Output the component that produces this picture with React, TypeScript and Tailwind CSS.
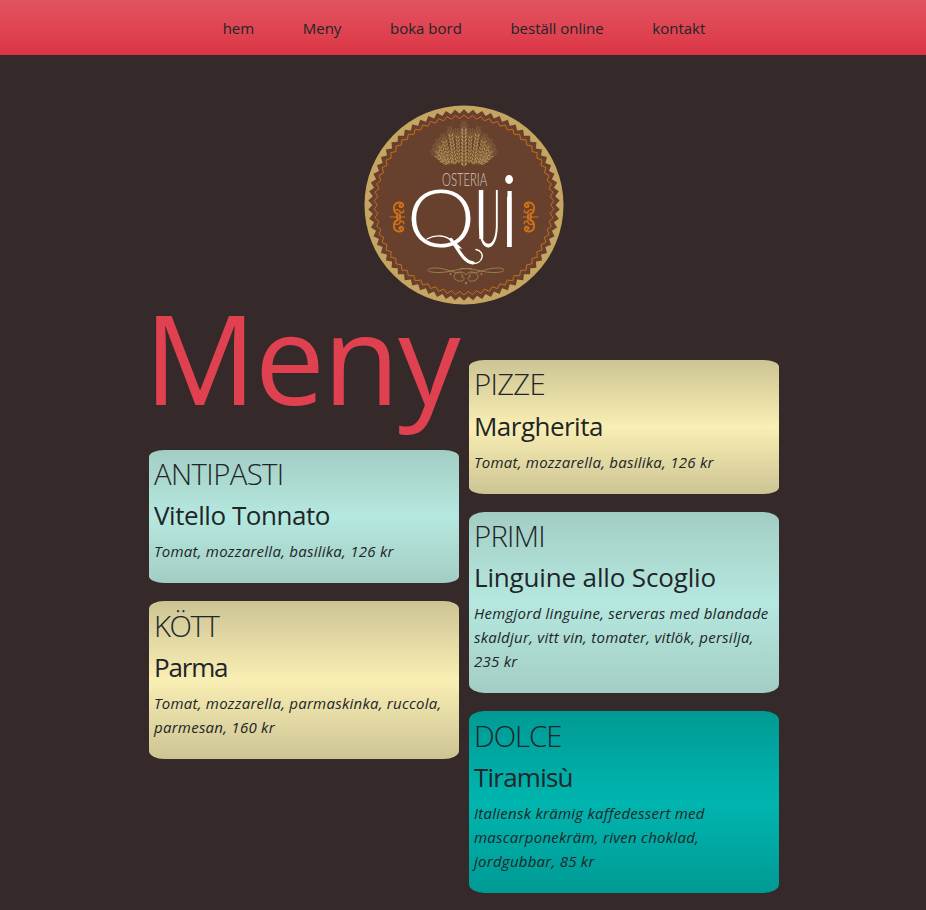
import React from "react";

const CX = 100;
const CY = 100;
const TEETH = 66;

function zigzag(outer: number, inner: number, teeth: number): string {
  const pts: string[] = [];
  for (let i = 0; i < teeth * 2; i++) {
    const a = (Math.PI * i) / teeth - Math.PI / 2;
    const r = i % 2 === 0 ? outer : inner;
    pts.push(`${(CX + r * Math.cos(a)).toFixed(2)},${(CY + r * Math.sin(a)).toFixed(2)}`);
  }
  return pts.join(" ");
}

const ears = [
  { x: 19, y: 59, len: 20, angle: 43, s: 0.8 },
  { x: 17, y: 60, len: 25, angle: 33, s: 0.8 },
  { x: 15, y: 60, len: 29, angle: 24, s: 0.8 },
  { x: 12.5, y: 60, len: 33, angle: 16, s: 0.85 },
  { x: 9, y: 60, len: 39, angle: 8, s: 0.95 },
  { x: 5, y: 59, len: 36, angle: 3, s: 0.75 },
  { x: 0, y: 62, len: 46, angle: 0, s: 1.15 },
];

function Ear({ x, y, len, angle, s }: { x: number; y: number; len: number; angle: number; s: number }) {
  const grains = [];
  for (let gy = -len + 9; gy < -2; gy += 3.4) {
    grains.push(
      <g key={gy}>
        <ellipse cx={-1.5 * s} cy={gy} rx={0.85 * s} ry={2} transform={`rotate(-28 ${-1.5 * s} ${gy})`} />
        <ellipse cx={1.5 * s} cy={gy} rx={0.85 * s} ry={2} transform={`rotate(28 ${1.5 * s} ${gy})`} />
      </g>
    );
  }
  return (
    <g transform={`translate(${CX + x} ${y}) rotate(${angle})`} fill="#ab8d55">
      {grains}
      <path
        d={`M0 0V${-len + 5}M-1.3 ${-len + 8}L-1.8 ${-len}M1.3 ${-len + 8}L1.8 ${-len}M0 ${-len + 7}V${-len}M-2.5 ${-len + 11}L-3.2 ${-len + 3}M2.5 ${-len + 11}L3.2 ${-len + 3}`}
        stroke="#957544"
        strokeWidth="0.5"
        fill="none"
      />
    </g>
  );
}

function SideOrnament() {
  return (
    <g fill="none" stroke="#d07019" strokeLinecap="round">
      <path d="M-8.5 0H6.5" strokeWidth="1.1" />
      <path d="M-1 -4V4M1.5 -4.5V4.5" strokeWidth="1.3" />
      <circle cx="0" cy="0" r="2.1" strokeWidth="1.3" />
      {[1, -1].map((f) => (
        <g key={f} transform={`scale(1 ${f})`}>
          <path d="M-1 -3C-6 -5 -6 -14 .5 -14.5C5 -14.8 6 -10.5 3 -9.8C.5 -9.5 .2 -12 2 -12.2" strokeWidth="1.9" />
          <path d="M-3 -7C-1 -8 1 -6.5 1.8 -5.2C3.5 -3.4 6 -4.5 5 -6.8" strokeWidth="1.4" />
        </g>
      ))}
    </g>
  );
}

function Logo() {
  return (
    <svg className="size-[200px]" viewBox="0 0 200 200">
      <defs>
        <clipPath id="bowl">
          <rect x="40" y="80" width="75" height="63.500" />
        </clipPath>
      </defs>
      <circle cx={CX} cy={CY} r="99.5" fill="#c4a562" />
      <polygon points={zigzag(95.8, 91.6, TEETH)} fill="#67412d" />
      <polygon points={zigzag(90, 86.6, TEETH)} fill="none" stroke="#d2701c" strokeWidth="0.9" />
      {ears.map((e, i) => (
        <g key={i}>
          <Ear {...e} />
          {e.x > 0 && <Ear {...e} x={-e.x} angle={-e.angle} />}
        </g>
      ))}
      <text className="font-['Lato']" x="78" y="81" fontSize="17" fontWeight="300" fill="#d8cac0" textLength="45" lengthAdjust="spacingAndGlyphs">OSTERIA</text>
      <g className="font-['Lato']" fill="#ffffff" fontWeight="300">
        <g clipPath="url(#bowl)">
          <text transform="translate(42.5 142) scale(1.09 1)" fontSize="80">Q</text>
        </g>
        <text transform="translate(111.5 142) scale(.44 1)" fontSize="80">U</text>
        <text transform="translate(135.6 142) scale(1.08 1.25)" fontSize="80">i</text>
      </g>
      <g fill="none" stroke="#ffffff" strokeLinecap="round">
        <path d="M63 134C71 129.500 83 129.500 88.500 137" strokeWidth="1.4" />
        <path d="M87 134.500C94 143 99 157 109 157.800" strokeWidth="3.2" />
        <path d="M109 158.500C119 159 122 146.500 112 144.500" strokeWidth="1.4" />
        <path d="M117.300 85V134" strokeWidth="4" strokeLinecap="butt" />
        <path d="M145.600 86V142" strokeWidth="4.300" strokeLinecap="butt" />
      </g>
      <g transform="translate(34.500 112)"><SideOrnament /></g>
      <g transform="translate(165.500 112) scale(-1 1)"><SideOrnament /></g>
      <g fill="none" stroke="#a0824d" strokeWidth="0.9">
        {[1, -1].map((f) => (
          <g key={f} transform={`translate(102 162) scale(${f} 1)`}>
            <path d="M-6 1.500C8 1 14 5 26 5.500C41 6 41 1 31 1C20 1 14 6 4 6" />
            <path d="M0 8C2 3.500 11 4 12 9C12.500 14 5 15 3 13.500C.5 11.500 3 8.500 5 10" />
            <circle cx="15.500" cy="7" r=".7" fill="#a0824d" />
            <circle cx="3.500" cy="8" r=".5" fill="#a0824d" />
          </g>
        ))}
        <circle cx="102" cy="178" r=".8" fill="#a0824d" />
      </g>
    </svg>
  );
}

type Tone = "cream" | "mint" | "teal";

const tones: Record<Tone, string> = {
  cream: "bg-[linear-gradient(#ccc494,#f9eeb3,#ccc494)]",
  mint: "bg-[linear-gradient(#a3cdc4,#b5e8df,#a3cdc4)]",
  teal: "bg-[linear-gradient(#009a94,#00b5af,#009a94)]",
};

interface CardProps {
  tone: Tone;
  category: string;
  categoryTracking: string;
  dish: string;
  dishTracking: string;
  lines: string[];
}

function Card({ tone, category, categoryTracking, dish, dishTracking, lines }: CardProps) {
  return (
    <section className={`mb-[18px] rounded-[5%] px-[5px] pt-[6.4px] pb-[20px] ${tones[tone]}`}>
      <h2 className={`h-[36px] text-[29.3px] leading-[36px] font-light whitespace-nowrap ${categoryTracking}`}>{category}</h2>
      <h3 className={`mt-[6.2px] h-[34px] text-[26px] leading-[34px] whitespace-nowrap ${dishTracking}`}>{dish}</h3>
      <p className="mt-[7px] text-[15px] leading-6 tracking-[0.017em] whitespace-nowrap italic">
        {lines.map((line) => (
          <span key={line} className="block">{line}</span>
        ))}
      </p>
    </section>
  );
}

export default function App() {
  return (
    <div className="h-[910px] overflow-hidden bg-[#352929] font-['Open_Sans',sans-serif] text-[#212529]">
      <nav className="flex h-[55px] items-center justify-center gap-[48.6px] bg-linear-to-b from-[#e25361] to-[#dc3545] pt-[2px] pl-[2px] text-[15px]">
        <a>hem</a>
        <a>Meny</a>
        <a>boka bord</a>
        <a>beställ online</a>
        <a>kontakt</a>
      </nav>
      <div className="mt-[50px] flex justify-center pl-[2px]">
        <Logo />
      </div>
      <main className="flex gap-[10px] pl-[149px]">
        <div className="w-[310px]">
          <h1 className="-mt-[3px] -ml-[5px] h-[147.6px] text-[125px] leading-[110px] tracking-[-0.014em] whitespace-nowrap text-[#df4150]">Meny</h1>
          <Card tone="mint" category="ANTIPASTI" categoryTracking="tracking-[-0.02em]" dish="Vitello Tonnato" dishTracking="tracking-[-0.017em]" lines={["Tomat, mozzarella, basilika, 126 kr"]} />
          <Card tone="cream" category="KÖTT" categoryTracking="tracking-[-0.05em]" dish="Parma" dishTracking="tracking-[-0.045em]" lines={["Tomat, mozzarella, parmaskinka, ruccola,", "parmesan, 160 kr"]} />
        </div>
        <div className="w-[310px] pt-[55px]">
          <Card tone="cream" category="PIZZE" categoryTracking="tracking-[-0.023em]" dish="Margherita" dishTracking="tracking-[-0.02em]" lines={["Tomat, mozzarella, basilika, 126 kr"]} />
          <Card tone="mint" category="PRIMI" categoryTracking="tracking-[-0.025em]" dish="Linguine allo Scoglio" dishTracking="tracking-[-0.006em]" lines={["Hemgjord linguine, serveras med blandade", "skaldjur, vitt vin, tomater, vitlök, persilja,", "235 kr"]} />
          <Card tone="teal" category="DOLCE" categoryTracking="tracking-[-0.035em]" dish="Tiramisù" dishTracking="tracking-[-0.03em]" lines={["Italiensk krämig kaffedessert med", "mascarponekräm, riven choklad,", "jordgubbar, 85 kr"]} />
        </div>
      </main>
    </div>
  );
}
